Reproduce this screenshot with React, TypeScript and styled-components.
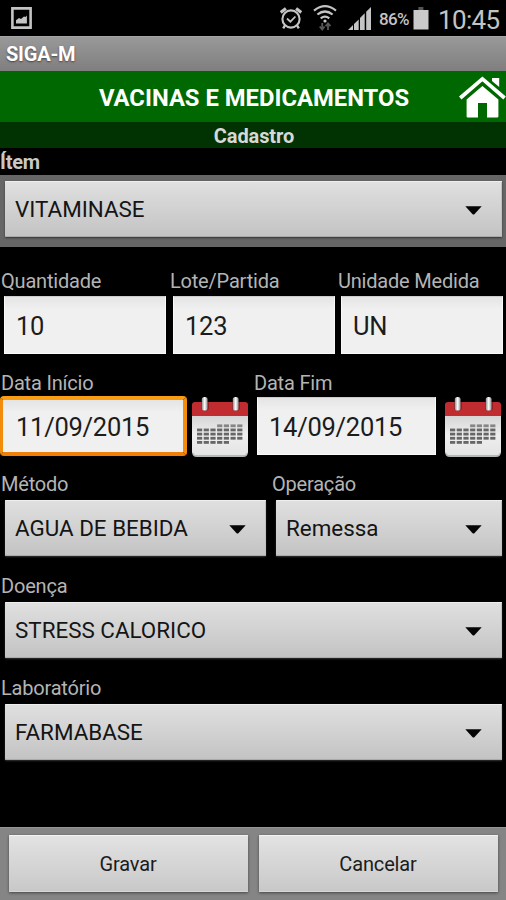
import React from 'react';
import styled, { createGlobalStyle, css } from 'styled-components';

const GlobalStyle = createGlobalStyle`
  *, *::before, *::after { box-sizing: border-box; }
  html, body { margin: 0; padding: 0; background: #000; }
  body { font-family: Roboto, "Liberation Sans", sans-serif; overflow: hidden; }
  button, input { font-family: inherit; margin: 0; }
`;

const Screen = styled.main`
  width: 506px;
  height: 900px;
  display: flex;
  flex-direction: column;
  background: #000;
  overflow: hidden;
`;

const StatusBar = styled.header`
  height: 36px;
  flex: none;
  display: flex;
  align-items: center;
  justify-content: space-between;
  padding: 0 6px 0 11px;
  color: #c4c4c4;
  svg { display: block; flex: none; }
`;

const StatusIcons = styled.div`
  display: flex;
  align-items: center;
`;

const Indicators = styled.div`
  display: grid;
  grid-template-columns: 22px 24px 24px;
  column-gap: 11px;
  align-items: center;
`;

const Battery = styled.span`
  font-size: 17px;
  font-weight: 500;
  line-height: 20px;
  letter-spacing: -0.6px;
  margin: 2px 2px 0 7px;
  width: 32px;
  white-space: nowrap;
`;

const Clock = styled.time`
  font-size: 26px;
  line-height: 30px;
  width: 62px;
  margin: 3px 0 0 9px;
  letter-spacing: -0.65px;
  white-space: nowrap;
`;

const TitleBar = styled.div`
  height: 35px;
  flex: none;
  padding: 1px 0 0 6px;
  border-top: 1px solid #a5a5a5;
  background: linear-gradient(#999, #807e7f);
  color: #fff;
  font-size: 20px;
  font-weight: 700;
  line-height: 32px;
  letter-spacing: -0.2px;
  text-shadow: 0 1px 2px #444;
`;

const Banner = styled.div`
  height: 51px;
  flex: none;
  display: grid;
  grid-template-columns: 48px 1fr 48px;
  align-items: center;
  background: #006800;
  svg { display: block; margin-left: 1px; }
`;

const BannerTitle = styled.h1`
  grid-column: 2;
  margin: 2px 0 0;
  padding-left: 2px;
  text-align: center;
  color: #fff;
  font-size: 23.8px;
  line-height: 30px;
  font-weight: 700;
  white-space: nowrap;
`;

const SubBanner = styled.h2`
  height: 26px;
  flex: none;
  margin: 0;
  padding: 0 0 0 2px;
  text-align: center;
  background: #013201;
  color: #d8d8d8;
  font-size: 20px;
  line-height: 28px;
  letter-spacing: -0.1px;
  font-weight: 700;
`;

const Label = styled.label<{ $strong?: boolean; $lineHeight?: number }>`
  display: block;
  height: 26px;
  padding-left: 1px;
  color: #b4b4b4;
  font-size: 20px;
  line-height: ${({ $lineHeight = 24 }) => $lineHeight}px;
  letter-spacing: -0.2px;
  white-space: nowrap;
  ${({ $strong }) => $strong && css`
    height: 27px;
    padding-left: 0;
    line-height: 28px;
    font-weight: 700;
    color: #c8c8c8;
  `}
`;

const HighlightBand = styled.div`
  height: 72px;
  flex: none;
  padding: 6px 4px 0 5px;
  background: #666;
`;

const Spinner = styled.button`
  width: 100%;
  height: 56px;
  padding: 0 20px 0 10px;
  display: flex;
  align-items: center;
  justify-content: space-between;
  border: 0;
  border-radius: 1px;
  background: linear-gradient(#e0e0e0, #c3c3c3);
  box-shadow: inset 0 1px #efefef, inset 0 -1px #aaa, inset -1px 0 #c0c0c0, 0 1px 2px #333;
  color: #151515;
  font-size: 22.4px;
  line-height: 28px;
  white-space: nowrap;
  text-align: left;
  svg { display: block; flex: none; margin-top: 3px; }
`;

const Form = styled.form`
  flex: 1;
  display: flex;
  flex-direction: column;
  padding-top: 23px;
`;

const FieldRow = styled.div<{ $columns: string; $height: number }>`
  display: grid;
  grid-template-columns: ${({ $columns }) => $columns};
  height: ${({ $height }) => $height}px;
  flex: none;
`;

const Field = styled.div<{ $left: number; $right: number }>`
  min-width: 0;
  & > :not(label) {
    margin-left: ${({ $left }) => $left}px;
    width: calc(100% - ${({ $left, $right }) => $left + $right}px);
  }
`;

const TextInput = styled.input<{ $focused?: boolean }>`
  display: block;
  height: 58px;
  padding: 2px 0 0 11px;
  border: 1px solid #fafafa;
  border-top-color: #ccc;
  border-radius: 0;
  outline: 0;
  background: linear-gradient(#e4e4e4, #f0f0f0 12px);
  color: #1c1c1c;
  font-size: 25.5px;
  line-height: 30px;
  letter-spacing: -0.25px;
  ${({ $focused }) => $focused && css`
    height: 60px;
    margin-top: -1px;
    padding: 2px 0 0 13px;
    border: 4px solid #f28c0a;
    border-top-color: #fb9d13;
    border-bottom-color: #ee7f08;
    border-left-width: 3px;
    border-radius: 4px;
  `}
`;

const DateEntry = styled.div`
  display: flex;
  align-items: flex-start;
`;

const CalendarButton = styled.button`
  width: 58px;
  height: 62px;
  flex: none;
  padding: 0;
  border: 0;
  background: none;
  svg { display: block; }
`;

const DateInput = styled(TextInput)<{ $width: number; $gap: number }>`
  width: ${({ $width }) => $width}px;
  margin-right: ${({ $gap }) => $gap}px;
  flex: none;
`;

const Footer = styled.footer`
  height: 73px;
  flex: none;
  display: grid;
  grid-template-columns: 239px 239px;
  gap: 11px;
  padding: 7px 0 0 9px;
  border-top: 1px solid #969696;
  background: #858585;
`;

const ActionButton = styled.button`
  height: 57px;
  padding: 0 1px 0 0;
  border: 0;
  border-radius: 1px;
  background: linear-gradient(#e3e3e3, #c8c8c8);
  box-shadow: inset 0 1px #f2f2f2, inset 0 -1px #d6d6d6, 0 1px 3px #444;
  color: #1c1c1c;
  font-size: 20px;
  line-height: 24px;
  letter-spacing: -0.15px;
`;

const Caret = () => (
  <svg width="17" height="9" viewBox="0 0 17 9">
    <path d="M.3.3h16.4L9.4 8.2q-.9.8-1.8 0z" fill="#050505" />
  </svg>
);

const PictureIcon = () => (
  <svg width="21" height="22" viewBox="0 0 21 22">
    <path d="M1.4 1.4h18.2v19.2H1.4z" fill="none" stroke="#c4c4c4" strokeWidth="2.6" />
    <path d="M5 16.4v-3.2l3-2.2 2 1.1 3-2.5 1.5.3 1.4-1.5v8z" fill="#c4c4c4" />
  </svg>
);

const AlarmIcon = () => (
  <svg width="22" height="22" viewBox="0 0 22 22" fill="none" stroke="#c4c4c4">
    <circle cx="11" cy="12" r="8.6" strokeWidth="2.1" />
    <path d="M7 11.5l3.4 3.2 5-5.2" strokeWidth="1.8" />
    <path d="M.7 5.4l5.2-4M21.3 5.4l-5.2-4" strokeWidth="3.2" />
    <path d="M5.2 18l-2 3.4M16.8 18l2 3.4" strokeWidth="2.4" />
  </svg>
);

const WifiIcon = () => (
  <svg width="24" height="26" viewBox="0 0 24 26" fill="none" stroke="#c4c4c4" strokeWidth="2.2">
    <path d="M1 5.6Q12-3.2 23 5.6M4.4 9.5q7.6-6 15.2 0M7.7 13.3q4.3-3.4 8.6 0" />
    <circle cx="12" cy="16" r="1.6" fill="#c4c4c4" stroke="none" />
    <g stroke="#565656" strokeWidth="1.8">
      <path d="M9.2 18v6M6.7 21.5l2.5 3 2.4-3M15 25v-6M12.6 21.2L15 18.3l2.5 2.9" />
    </g>
  </svg>
);

const SignalIcon = () => (
  <svg width="24" height="24" viewBox="0 0 24 24" fill="#c4c4c4">
    <path d="M0 24l5-5v5zM6 18l4.7-4.6V24H6z" />
    <path d="M12 12l4.7-4.8V24H12zM18.2 5.8L23 1v23h-4.8z" />
  </svg>
);

const BatteryIcon = () => (
  <svg width="16" height="24" viewBox="0 0 16 24">
    <path d="M5.4 1h5v3h-5z" fill="#555" />
    <path d="M.5 4h15v19.5H.5z" fill="#cacaca" />
  </svg>
);

const HomeIcon = () => (
  <svg width="47" height="42" viewBox="0 0 47 42" fill="#fff">
    <path d="M1.2 22L23.4 2.9 45.6 22" fill="none" stroke="#fff" strokeWidth="3.8" />
    <path d="M33 2h7.2v9L33 4.9z" />
    <path d="M7.6 23.5L23.4 10 39.4 23.5v17.1a1 1 0 0 1-1 1H28V26.9h-9v14.7H8.6a1 1 0 0 1-1-1z" />
  </svg>
);

/* Weekday cells in the calendar sheet: [first column, last column] for each week. */
const WEEKS: [number, number][] = [[3, 6], [0, 6], [0, 6], [0, 6], [0, 4]];

const CalendarIcon = () => (
  <svg width="58" height="62" viewBox="0 0 58 62">
    <defs>
      <linearGradient id="sheet" x1="0" y1="0" x2="0" y2="1">
        <stop offset="0" stopColor="#d4d4d4" />
        <stop offset=".5" stopColor="#eee" />
        <stop offset="1" stopColor="#e4e4e4" />
      </linearGradient>
      <linearGradient id="ring" x1="0" x2="1">
        <stop offset="0" stopColor="#909090" />
        <stop offset=".5" stopColor="#fff" />
        <stop offset="1" stopColor="#8c8c8c" />
      </linearGradient>
    </defs>
    <path d="M1 18h56v37q0 5-5 5H6q-5 0-5-5z" fill="#b3b8b8" />
    <path d="M1 18h56v37l-3 3H4l-3-3z" fill="url(#sheet)" />
    <path d="M1 19V8q0-3 3-3h50q3 0 3 3v11z" fill="#c12c31" />
    <path d="M10 5h8v7q-4 4-8 0zM41 5h8v7q-4 4-8 0z" fill="#8f1d22" />
    <rect x="10.8" y="0" width="5.8" height="13.6" rx="2.6" fill="url(#ring)" />
    <rect x="41.8" y="0" width="5.8" height="13.6" rx="2.6" fill="url(#ring)" />
    {WEEKS.map(([from, to], row) =>
      Array.from({ length: to - from + 1 }, (_, i) => (
        <rect key={`${row}-${i}`} x={6 + (from + i) * 6.7} y={27.4 + row * 4.15} width="5.2" height="2.8" fill={row === 0 ? '#858585' : '#666'} />
      )),
    )}
  </svg>
);

const Select = ({ value }: { value: string }) => (
  <Spinner type="button">
    <span>{value}</span>
    <Caret />
  </Spinner>
);

export default function App() {
  return (
    <Screen>
      <GlobalStyle />
      <StatusBar>
        <PictureIcon />
        <StatusIcons>
          <Indicators>
            <AlarmIcon />
            <WifiIcon />
            <SignalIcon />
          </Indicators>
          <Battery>86%</Battery>
          <BatteryIcon />
          <Clock>10:45</Clock>
        </StatusIcons>
      </StatusBar>
      <TitleBar>SIGA-M</TitleBar>
      <Banner>
        <BannerTitle>VACINAS E MEDICAMENTOS</BannerTitle>
        <HomeIcon />
      </Banner>
      <SubBanner>Cadastro</SubBanner>
      <Label $strong>Ítem</Label>
      <HighlightBand>
        <Select value="VITAMINASE" />
      </HighlightBand>
      <Form>
        <FieldRow $columns="169px 168px 169px" $height={101}>
          <Field $left={4} $right={3}>
            <Label $lineHeight={23}>Quantidade</Label>
            <TextInput defaultValue="10" />
          </Field>
          <Field $left={4} $right={2}>
            <Label $lineHeight={23}>Lote/Partida</Label>
            <TextInput defaultValue="123" />
          </Field>
          <Field $left={4} $right={3}>
            <Label $lineHeight={23}>Unidade Medida</Label>
            <TextInput defaultValue="UN" />
          </Field>
        </FieldRow>
        <FieldRow $columns="253px 253px" $height={103}>
          <Field $left={0} $right={0}>
            <Label>Data Início</Label>
            <DateEntry>
              <DateInput $focused $width={187} $gap={4} defaultValue="11/09/2015" />
              <CalendarButton type="button"><CalendarIcon /></CalendarButton>
            </DateEntry>
          </Field>
          <Field $left={4} $right={0}>
            <Label>Data Fim</Label>
            <DateEntry>
              <DateInput $width={179} $gap={8} defaultValue="14/09/2015" />
              <CalendarButton type="button"><CalendarIcon /></CalendarButton>
            </DateEntry>
          </Field>
        </FieldRow>
        <FieldRow $columns="271px 235px" $height={102}>
          <Field $left={5} $right={5}>
            <Label $lineHeight={20}>Método</Label>
            <Select value="AGUA DE BEBIDA" />
          </Field>
          <Field $left={5} $right={4}>
            <Label $lineHeight={20}>Operação</Label>
            <Select value="Remessa" />
          </Field>
        </FieldRow>
        <FieldRow $columns="506px" $height={102}>
          <Field $left={5} $right={4}>
            <Label $lineHeight={20}>Doença</Label>
            <Select value="STRESS CALORICO" />
          </Field>
        </FieldRow>
        <FieldRow $columns="506px" $height={102}>
          <Field $left={5} $right={4}>
            <Label $lineHeight={20}>Laboratório</Label>
            <Select value="FARMABASE" />
          </Field>
        </FieldRow>
      </Form>
      <Footer>
        <ActionButton type="button">Gravar</ActionButton>
        <ActionButton type="button">Cancelar</ActionButton>
      </Footer>
    </Screen>
  );
}
